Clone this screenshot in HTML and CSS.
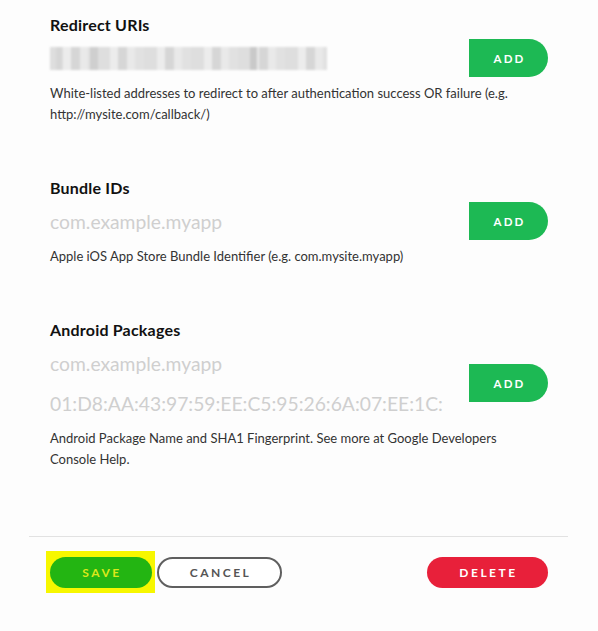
FILE: index.html
```html
<!DOCTYPE html>
<html lang="en">
<head>
<meta charset="utf-8">
<title>Edit settings</title>
<link rel="stylesheet" href="styles.css">
</head>
<body>
<div class="panel">
  <div class="fields">
    <section class="field">
      <h3 class="field-title">Redirect URIs</h3>
      <div class="field-row">
        <div class="inputs">
          <div class="input-wrap"><div class="blurred" aria-label="redacted URI"></div></div>
        </div>
        <button class="btn-add">ADD</button>
      </div>
      <p class="field-help">White-listed addresses to redirect to after authentication success OR failure (e.g. http://mysite.com/callback/)</p>
    </section>

    <section class="field">
      <h3 class="field-title">Bundle IDs</h3>
      <div class="field-row">
        <div class="inputs">
          <input class="text-input" type="text" placeholder="com.example.myapp">
        </div>
        <button class="btn-add">ADD</button>
      </div>
      <p class="field-help">Apple iOS App Store Bundle Identifier (e.g. com.mysite.myapp)</p>
    </section>

    <section class="field">
      <h3 class="field-title">Android Packages</h3>
      <div class="field-row">
        <div class="inputs">
          <input class="text-input" type="text" placeholder="com.example.myapp">
          <input class="text-input" type="text" placeholder="01:D8:AA:43:97:59:EE:C5:95:26:6A:07:EE:1C:">
        </div>
        <button class="btn-add">ADD</button>
      </div>
      <p class="field-help">Android Package Name and SHA1 Fingerprint. See more at Google Developers Console Help.</p>
    </section>
  </div>

  <div class="footer">
    <div class="highlight"><button class="btn btn-save">SAVE</button></div>
    <button class="btn btn-cancel">CANCEL</button>
    <button class="btn btn-delete">DELETE</button>
  </div>
</div>
</body>
</html>
```

FILE: styles.css
```css
* { box-sizing: border-box; }

html, body {
  margin: 0;
  padding: 0;
  background: #fdfdfd;
}

body {
  font-family: Lato, "Liberation Sans", sans-serif;
  color: #222;
}

.panel {
  width: 539px;
  margin-left: 29px;
}

.fields {
  padding: 15px 20px 0 21px;
}

.field + .field {
  margin-top: 53px;
}

.field-title {
  margin: 0;
  font-size: 16px;
  line-height: 20px;
  font-weight: 700;
  letter-spacing: 0.2px;
  color: #111;
}

.field-row {
  display: flex;
  align-items: center;
  margin-top: 3px;
}

.inputs {
  flex: 1;
  display: flex;
  flex-direction: column;
}

.input-wrap {
  height: 40px;
  display: flex;
  align-items: center;
}

.blurred {
  width: 277px;
  height: 23px;
  background:
    linear-gradient(90deg, transparent 0 6px, #d6d6d6 6px 12px, transparent 12px 40px, #cfcfcf 40px 48px, transparent 48px 200px, #c9c9c9 200px 207px, transparent 207px),
    repeating-linear-gradient(90deg, #dedede 0 13px, #ececec 13px 21px, #d6d6d6 21px 30px, #e9e9e9 30px 38px, #e1e1e1 38px 47px);
  filter: blur(1.2px);
}

.text-input {
  display: block;
  height: 40px;
  width: 100%;
  border: none;
  background: transparent;
  padding: 0;
  font-family: Lato, "Liberation Sans", sans-serif;
  font-size: 19.3px;
  color: #333;
  outline: none;
}

.text-input::placeholder {
  color: #cfcfcf;
}

.btn-add {
  flex: none;
  width: 79px;
  height: 38px;
  border: none;
  border-radius: 0 19px 19px 0;
  background: #1db954;
  color: #fff;
  font-family: Lato, "Liberation Sans", sans-serif;
  font-weight: 700;
  font-size: 11.5px;
  letter-spacing: 2.2px;
  padding: 0 0 0 2px;
}

.field-help {
  max-width: 458px;
  margin: 5px 0 0;
  font-size: 13px;
  line-height: 21px;
  color: #333;
}

.footer {
  margin-top: 66px;
  border-top: 1px solid #e2e2e2;
  padding: 14px 20px 0 17px;
  display: flex;
  align-items: center;
}

.highlight {
  background: #f7f700;
  padding: 6px 3px 5px 4px;
}

.btn {
  height: 31px;
  border-radius: 16px;
  font-family: Lato, "Liberation Sans", sans-serif;
  font-weight: 700;
  font-size: 12px;
  letter-spacing: 2.5px;
  padding: 0 0 0 2px;
}

.btn-save {
  display: block;
  width: 102px;
  border: none;
  background: #23b512;
  color: #dbe81c;
}

.btn-cancel {
  width: 125px;
  margin-left: 2px;
  border: 2px solid #5f5f5f;
  background: #fff;
  color: #555;
}

.btn-delete {
  width: 121px;
  margin-left: auto;
  border: none;
  background: #e8203a;
  color: #fff;
}
```
